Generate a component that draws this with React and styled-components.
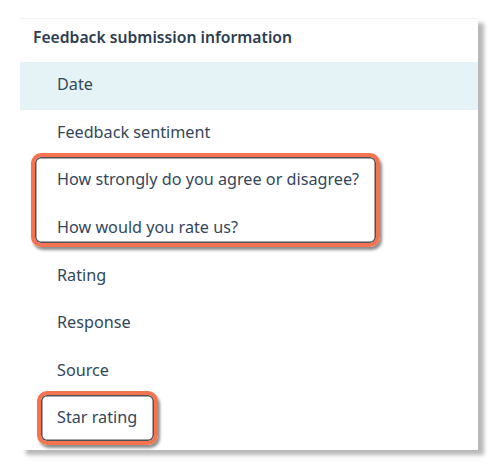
import React from 'react';
import styled, { createGlobalStyle } from 'styled-components';

const GlobalStyle = createGlobalStyle`
  body {
    margin: 0;
    background: #ffffff;
    font-family: "Noto Sans", "Open Sans", sans-serif;
    color: #33475b;
  }
`;

const Page = styled.div`
  width: 500px;
  height: 470px;
  padding: 18px 0 0 20px;
  box-sizing: border-box;
`;

const Card = styled.div`
  width: 458px;
  height: 432px;
  background: #fff;
  border-top: 1px solid #f2f2f2;
  box-sizing: border-box;
  box-shadow: 6px 5px 4px rgba(0, 0, 0, 0.28);
  display: flex;
  flex-direction: column;
`;

const Header = styled.div`
  height: 43px;
  flex: none;
  display: flex;
  align-items: center;
  padding: 0 0 7px 13px;
  box-sizing: border-box;
  font-size: 15.7px;
  font-weight: 600;
  color: #2d3e50;
`;

const Row = styled.div`
  height: 47.6px;
  flex: none;
  display: flex;
  align-items: center;
  padding: 0 0 3px 37px;
  box-sizing: border-box;
  font-size: 16.2px;
  background: ${(p) => (p.active ? '#e5f3f7' : 'transparent')};
`;

const Group = styled.div`
  position: relative;
  flex: none;

  &::after {
    content: '';
    position: absolute;
    left: ${(p) => p.left}px;
    top: ${(p) => p.top}px;
    width: ${(p) => p.width}px;
    height: ${(p) => p.height}px;
    box-sizing: border-box;
    border: 4px solid #f5734f;
    border-radius: 10px;
    box-shadow: inset 0 0 0 1.5px #4e5156, 2px 3px 3px rgba(0, 0, 0, 0.45);
    pointer-events: none;
  }
`;

export default function App() {
  return (
    <Page>
      <GlobalStyle />
      <Card>
        <Header>Feedback submission information</Header>
        <Row active>Date</Row>
        <Row>Feedback sentiment</Row>
        <Group left={11} top={-4} width={349} height={94}>
          <Row>How strongly do you agree or disagree?</Row>
          <Row>How would you rate us?</Row>
        </Group>
        <Row>Rating</Row>
        <Row>Response</Row>
        <Row>Source</Row>
        <Group left={17} top={-4} width={121} height={54}>
          <Row>Star rating</Row>
        </Group>
      </Card>
    </Page>
  );
}
